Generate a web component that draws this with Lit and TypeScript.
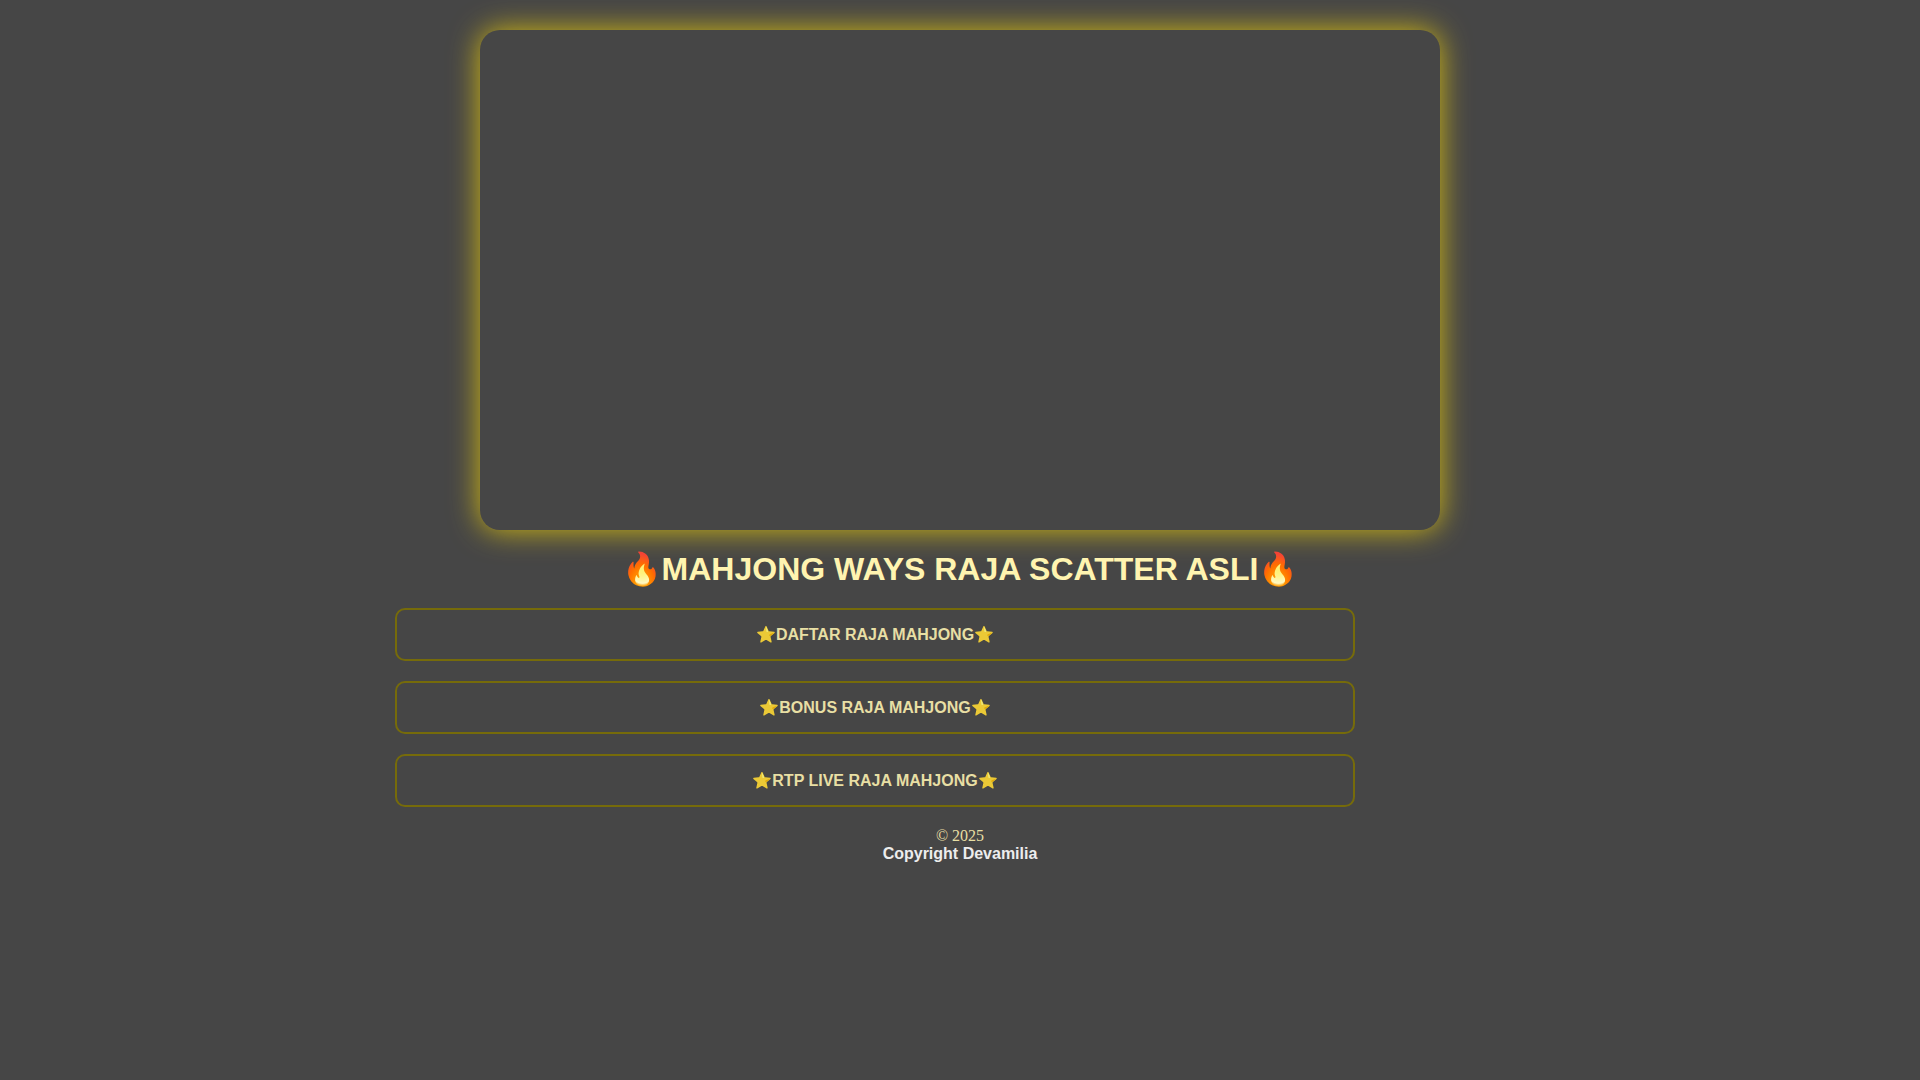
import { LitElement, html, css } from "lit";
import { customElement } from "lit/decorators.js";

const LINKS = ["DAFTAR RAJA MAHJONG", "BONUS RAJA MAHJONG", "RTP LIVE RAJA MAHJONG"];

@customElement("app-root")
export class AppRoot extends LitElement {
  static styles = css`
    :host {
      display: block;
      box-sizing: border-box;
      min-height: 100vh;
      padding: 30px 0;
      background: #464646;
      color: #fff4b0;
    }
    .banner {
      width: 50%;
      height: 500px;
      margin: 0 auto;
      border-radius: 20px;
      box-shadow: 0 0 30px rgba(255, 221, 0, 0.77);
    }
    .title {
      margin: 20px 0;
      text-align: center;
      font: bold 32px/38px "Liberation Sans", Arial, sans-serif;
    }
    .links {
      display: flex;
      flex-direction: column;
      gap: 20px;
      box-sizing: border-box;
      max-width: 1150px;
      margin: 0 auto;
      padding: 0 10px;
    }
    .link {
      box-sizing: border-box;
      width: 100%;
      max-width: 960px;
      padding: 15px;
      border: 2px solid #766b0a;
      border-radius: 10px;
      color: #e8dfa4;
      text-align: center;
      text-decoration: none;
      font: bold 16px/19px "Liberation Sans", Arial, sans-serif;
    }
    .star {
      opacity: 0.9;
    }
    .footer {
      margin-top: 20px;
      text-align: center;
      color: #e8dfa4;
      font: 16px/18px "Liberation Serif", "Times New Roman", serif;
    }
    .owner {
      display: block;
      color: #ededed;
      text-decoration: none;
      font: bold 16px/18px "Liberation Sans", Arial, sans-serif;
    }
  `;

  render() {
    return html`
      <main>
        <div class="banner"></div>
        <h1 class="title">🔥MAHJONG WAYS RAJA SCATTER ASLI🔥</h1>
        <nav class="links">
          ${LINKS.map(
            (label) => html`<a class="link" href="#"
              ><span class="star">⭐</span>${label}<span class="star">⭐</span></a
            >`
          )}
        </nav>
      </main>
      <footer class="footer">
        © 2025
        <a class="owner" href="#">Copyright Devamilia</a>
      </footer>
    `;
  }
}
